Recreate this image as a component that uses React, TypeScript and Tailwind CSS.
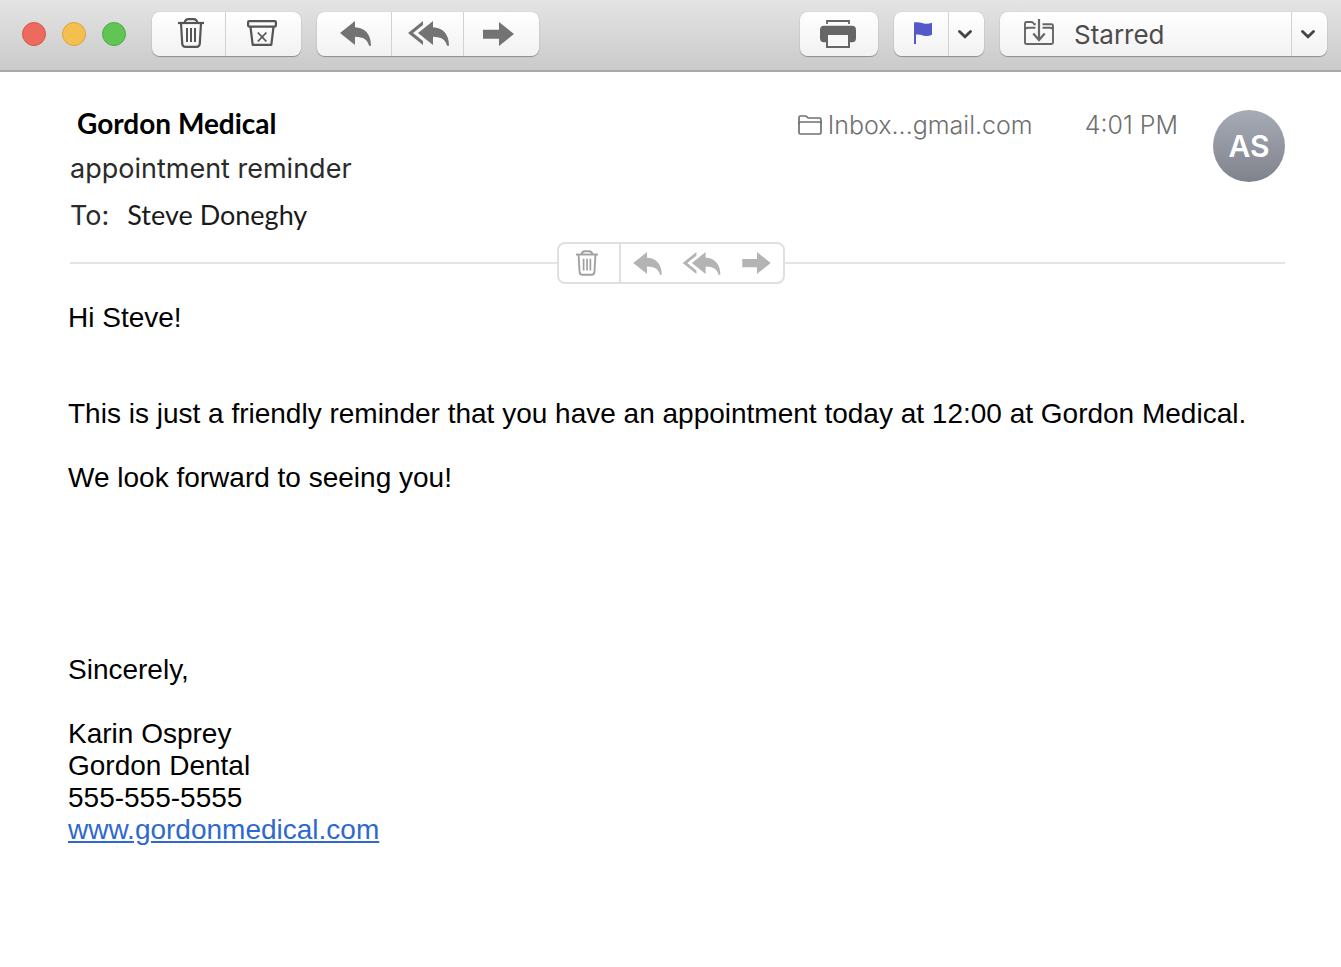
import React from 'react';
import clsx from 'clsx';

type IconProps = { className?: string };

const TrashIcon = ({ className }: IconProps) => (
  <svg viewBox="0 0 26 30" className={className} fill="none" stroke="currentColor" strokeWidth="2.200" aria-hidden="true">
    <path d="M0 5h26" />
    <path d="M6.500 5C7 2.200 8.500 1.100 10.500 1.100h5c2 0 3.500 1.100 4 3.900" />
    <path d="M3 5l1.200 20.500C4.400 28 5.500 28.900 7.500 28.900h11c2 0 3.100-.9 3.300-3.400L23 5" />
    <path d="M9 10v14M13 10v14M17 10v14" strokeWidth="2" />
  </svg>
);

const ArchiveIcon = ({ className }: IconProps) => (
  <svg viewBox="0 0 30 26" className={className} fill="none" stroke="currentColor" strokeWidth="2.200" aria-hidden="true">
    <rect x="1.100" y="1.100" width="27.800" height="5.500" rx="1" />
    <path d="M3.500 7l2.200 17.900h18.600l2.200-17.900" strokeLinejoin="round" />
    <path d="M10.800 12.500l8.600 9M19.400 12.500l-8.600 9" strokeWidth="1.800" />
  </svg>
);

const ReplyIcon = ({ className }: IconProps) => (
  <svg viewBox="0 0 31 25" className={className} fill="currentColor" aria-hidden="true">
    <path d="M0 12L15 0v6.300C25 6.500 31 13.500 31 24.700h-2C27.500 18.500 23.500 16 15 15.700V24z" />
  </svg>
);

const ReplyAllIcon = ({ className }: IconProps) => (
  <svg viewBox="0 0 41 25" className={className} fill="currentColor" aria-hidden="true">
    <path d="M0 12L15 0v4L5 12l10 8v4z" />
    <path d="M10 12L25 0v6.300C35 6.500 41 13.500 41 24.700h-2C37.500 18.500 33.500 16 25 15.700V24z" />
  </svg>
);

const ForwardIcon = ({ className }: IconProps) => (
  <svg viewBox="0 0 31 24" className={className} fill="currentColor" aria-hidden="true">
    <path d="M0 7.700h16V0l15 12-15 12v-7.300H0z" />
  </svg>
);

const PrinterIcon = ({ className }: IconProps) => (
  <svg viewBox="0 0 36 28" className={className} aria-hidden="true">
    <path d="M7 4V1h22v3" fill="none" stroke="currentColor" strokeWidth="1.800" />
    <rect y="5.700" width="36" height="16.600" rx="4" fill="currentColor" />
    <rect x="7" y="14" width="22" height="13" fill="#f8f8f8" stroke="currentColor" strokeWidth="2" />
  </svg>
);

const FlagIcon = ({ className }: IconProps) => (
  <svg viewBox="0 0 18 22" className={className} fill="currentColor" aria-hidden="true">
    <path d="M0 .5C3-.3 6 .3 9 1.200c3 .9 6 .7 9-.5v12c-3 1.400-6 1.600-9 .7-2.500-.8-4.800-1.200-7-.8V22H0z" />
  </svg>
);

const ChevronIcon = ({ className }: IconProps) => (
  <svg viewBox="0 0 14 9" className={className} fill="none" stroke="currentColor" strokeWidth="2.800" aria-hidden="true">
    <path d="M1.500 1.500L7 6.800l5.500-5.300" strokeLinecap="round" />
  </svg>
);

const MoveIcon = ({ className }: IconProps) => (
  <svg viewBox="0 0 30 26" className={className} fill="none" stroke="currentColor" strokeWidth="1.900" aria-hidden="true">
    <path d="M11.500 8.700H4.500Q1 8.700 1 11M1 11V4.500Q1 3 2.500 3H7q1.500 0 2.300 1l.9 1.200h1.600" />
    <path d="M18.500 5.300H27.500Q29 5.300 29 6.800V23.500Q29 25 27.500 25H2.500Q1 25 1 23.500V11M18.500 8.700H26Q29 8.700 29 11" />
    <path d="M15 0v21M9.300 14.500L15 21l5.700-6.500" strokeWidth="2.200" />
  </svg>
);

const FolderIcon = ({ className }: IconProps) => (
  <svg viewBox="0 0 24 20" className={className} fill="none" stroke="currentColor" strokeWidth="1.700" aria-hidden="true">
    <path d="M1 17.500V2.500Q1 1 2.500 1H7q1.300 0 2 .8L10.200 3H21.500Q23 3 23 4.500v13q0 1.500-1.500 1.500h-19Q1 19 1 17.500z" />
    <path d="M1 9q0-2 2-2h18q2 0 2 2" />
  </svg>
);

type ToolButtonProps = { label: string; className: string; children: React.ReactNode };

const ToolButton = ({ label, className, children }: ToolButtonProps) => (
  <button type="button" aria-label={label} className={clsx('flex h-full items-center justify-center', className)}>
    {children}
  </button>
);

const ToolGroup = ({ children }: { children: React.ReactNode }) => (
  <div className="flex h-11 divide-x divide-[#d2d2d2] rounded-lg bg-linear-to-b from-white to-[#f2f2f2] text-[#737373] shadow-[0_1px_1px_rgba(0,0,0,0.3),0_0_1px_rgba(0,0,0,0.25)]">
    {children}
  </div>
);

const lights = [
  { label: 'Close', color: 'bg-[#ec6a5e] border-[#d5564b]' },
  { label: 'Minimize', color: 'bg-[#f5bf4f] border-[#d9a63c]' },
  { label: 'Zoom', color: 'bg-[#61c554] border-[#4dab42]' },
];

const Toolbar = () => (
  <header className="flex h-18 items-center border-b-2 border-[#a9a9a9] bg-linear-to-b from-[#e4e4e4] to-[#cacaca] pr-3.5 pb-0.5 pl-[22px]">
    <div className="flex gap-4">
      {lights.map((light) => (
        <button
          key={light.label}
          type="button"
          aria-label={light.label}
          className={clsx('size-6 rounded-full border', light.color)}
        />
      ))}
    </div>

    <div className="ml-[26px] flex gap-4">
      <ToolGroup>
        <ToolButton label="Delete" className="w-[74px] pb-0.5 pl-1">
          <TrashIcon className="h-[30px] w-[26px] text-[#555]" />
        </ToolButton>
        <ToolButton label="Archive" className="w-[75px] pr-1 pb-0.5">
          <ArchiveIcon className="h-[26px] w-[30px] text-[#555]" />
        </ToolButton>
      </ToolGroup>
      <ToolGroup>
        <ToolButton label="Reply" className="w-[75px] pb-0.5 pl-0.5">
          <ReplyIcon className="h-[25px] w-[31px]" />
        </ToolButton>
        <ToolButton label="Reply all" className="w-[72px] pb-0.5 pl-0.5">
          <ReplyAllIcon className="h-[25px] w-[41px]" />
        </ToolButton>
        <ToolButton label="Forward" className="w-[75px] pr-1.5">
          <ForwardIcon className="h-6 w-[31px]" />
        </ToolButton>
      </ToolGroup>
    </div>

    <div className="ml-auto flex gap-4">
      <ToolGroup>
        <ToolButton label="Print" className="w-[78px] pr-0.5">
          <PrinterIcon className="h-7 w-9 text-[#666]" />
        </ToolButton>
      </ToolGroup>
      <ToolGroup>
        <ToolButton label="Flag" className="w-[55px] pb-0.5 pl-1">
          <FlagIcon className="h-[22px] w-[18px] text-[#5459c9]" />
        </ToolButton>
        <ToolButton label="Flag options" className="w-[35px] pr-1">
          <ChevronIcon className="h-[9px] w-3.5 text-[#444]" />
        </ToolButton>
      </ToolGroup>
      <ToolGroup>
        <button type="button" className="flex h-full w-[292px] items-center pl-6 text-left">
          <MoveIcon className="mb-1 h-[26px] w-[30px] text-[#666]" />
          <span className="mt-0.5 ml-5 text-[26px] leading-8 text-[#4c4c4c]">Starred</span>
        </button>
        <ToolButton label="Choose mailbox" className="w-[35px] pr-1">
          <ChevronIcon className="h-[9px] w-3.5 text-[#444]" />
        </ToolButton>
      </ToolGroup>
    </div>
  </header>
);

const MessageHeader = () => (
  <section className="flex items-start pt-7 pr-14 pl-[70px]">
    <div className="text-[27px] leading-[46px] text-[#2b2b2b]">
      <h1 className="pl-[7px] font-[Lato,sans-serif] text-[28px] font-bold text-black">Gordon Medical</h1>
      <p>appointment reminder</p>
      <p>
        To:
        <span className="ml-[18px] font-[Lato,sans-serif] text-[#1a1a1a]">Steve Doneghy</span>
      </p>
    </div>
    <div className="ml-auto flex text-[25px] leading-[50px] font-light text-[#707070]">
      <span className="flex items-center">
        <FolderIcon className="mr-1.5 h-5 w-6" />
        Inbox...gmail.com
      </span>
      <time className="ml-[52px]">4:01 PM</time>
    </div>
    <div className="mt-2.5 ml-[35px] flex size-18 items-center justify-center rounded-full bg-linear-to-b from-[#a6abb6] to-[#80838c] text-[30px] font-semibold text-white">
      AS
    </div>
  </section>
);

const ActionDivider = () => (
  <div className="mt-[3px] grid grid-cols-[1fr_auto_1fr] items-center">
    <div className="pl-[70px]">
      <hr className="border-t-2 border-[#e4e4e4]" />
    </div>
    <div className="flex h-[42px] rounded-lg border-2 border-[#e0e0e0] text-[#b4b4b4]">
      <ToolButton label="Delete message" className="w-[62px] border-r-2 border-[#e0e0e0] pr-1">
        <TrashIcon className="h-[26px] w-[22px] text-[#a0a0a0]" />
      </ToolButton>
      <div className="flex w-[162px] items-center justify-between px-3">
        <ToolButton label="Reply to message" className="w-[29px]">
          <ReplyIcon className="h-[23px] w-[29px]" />
        </ToolButton>
        <ToolButton label="Reply to everyone" className="w-[39px]">
          <ReplyAllIcon className="h-[23px] w-[39px]" />
        </ToolButton>
        <ToolButton label="Forward message" className="w-[29px]">
          <ForwardIcon className="h-[22px] w-[29px]" />
        </ToolButton>
      </div>
    </div>
    <div className="pr-14">
      <hr className="border-t-2 border-[#e4e4e4]" />
    </div>
  </div>
);

const MessageBody = () => (
  <article className="px-[68px] pt-[18px] pb-8 font-['Liberation_Sans',Arial,sans-serif] text-[28px] leading-8 text-black">
    <p>Hi Steve!</p>
    <p className="mt-16">This is just a friendly reminder that you have an appointment today at 12:00 at Gordon Medical.</p>
    <p className="mt-8">We look forward to seeing you!</p>
    <p className="mt-40">Sincerely,</p>
    <address className="mt-8 not-italic">
      Karin Osprey
      <br />
      Gordon Dental
      <br />
      555-555-5555
      <br />
      <a href="http://www.gordonmedical.com" className="text-[#2f69cf] underline">
        www.gordonmedical.com
      </a>
    </address>
  </article>
);

export default function App() {
  return (
    <main className="min-h-screen bg-white font-[Inter,sans-serif]">
      <Toolbar />
      <MessageHeader />
      <ActionDivider />
      <MessageBody />
    </main>
  );
}
